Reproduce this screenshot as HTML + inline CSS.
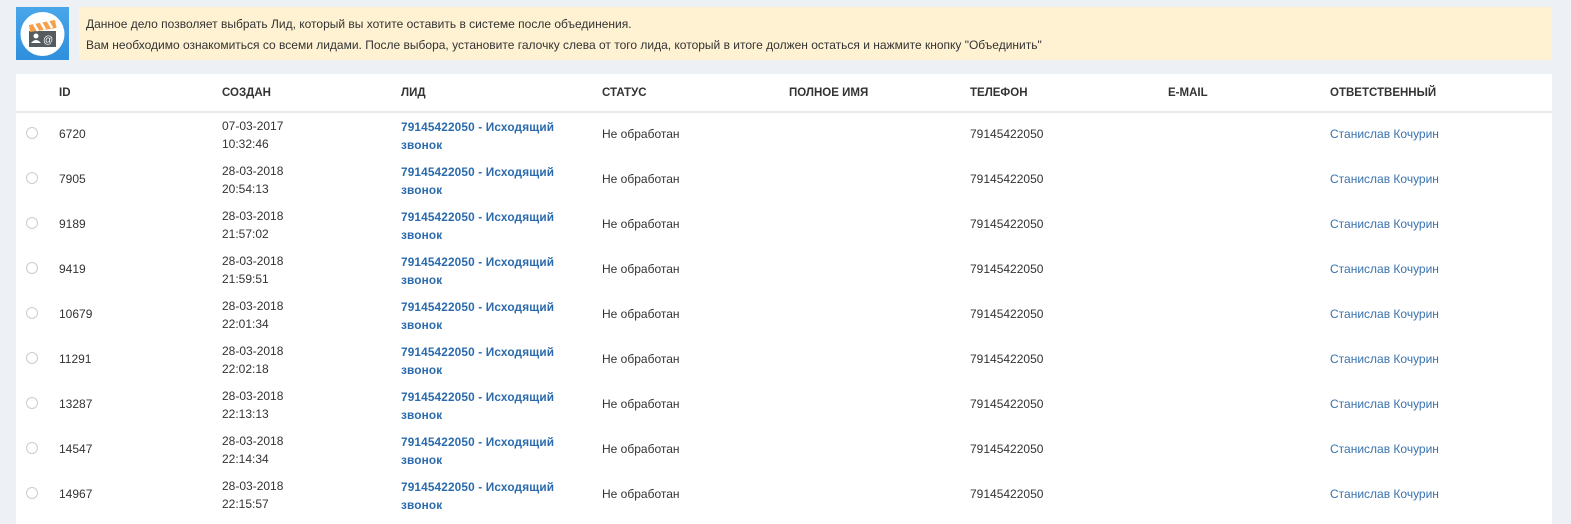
<!DOCTYPE html>
<html><head><meta charset="utf-8"><style>
html,body{margin:0;height:524px;overflow:hidden}
body{background:#edf1f5;font-family:"Liberation Sans",Arial,sans-serif;width:1571px;position:relative;color:#333}
.ic{position:absolute;left:16px;top:7px;width:53px;height:53px;background:linear-gradient(#4aa6ea,#2f8fdc)}
.info{position:absolute;left:79px;top:7px;width:1473px;height:53px;background:#fff2d2;font-size:12px;line-height:21px;color:#333;box-sizing:border-box;padding:7px 0 0 7px}
.tbl{position:absolute;left:16px;top:74px;width:1536px;height:460px;background:#fff}
.hd{position:absolute;left:0;top:0;width:100%;height:37px;border-bottom:2px solid #e6ebf0}
.c{position:absolute;font-size:12px}
.h{font-weight:bold;font-size:11.5px;top:13px;color:#333}
.row{position:absolute;left:0;width:100%;height:45px}
.r{position:absolute;left:10px;top:15px;width:12px;height:12px;border:1px solid #ccc;border-radius:50%;box-sizing:border-box}
.l{color:#2a6aad;font-weight:bold;font-size:11.8px;line-height:18px;letter-spacing:0.15px}
.a{color:#3973ae}
.d{line-height:18px}
</style></head><body>
<div class="ic"><svg width="53" height="53" viewBox="0 0 53 53">
<circle cx="26.5" cy="27" r="22" fill="#fff"/>
<rect x="13" y="24" width="27" height="16" fill="#555b5f"/>
<path d="M13 18 L39 13 L40.5 21 L14 25Z" fill="#f5a04a"/>
<path d="M18 17 L22 24 M25 15.5 L29 22.5 M32 14 L36 21" stroke="#fff" stroke-width="2.5"/>
<circle cx="20" cy="29" r="2.5" fill="#fff"/><path d="M15 36 Q20 30 25 36Z" fill="#fff"/>
<text x="27" y="36" font-size="10" fill="#fff" font-family="Liberation Sans">@</text>
</svg></div>
<div class="info">Данное дело позволяет выбрать Лид, который вы хотите оставить в системе после объединения.<br>Вам необходимо ознакомиться со всеми лидами. После выбора, установите галочку слева от того лида, который в итоге должен остаться и нажмите кнопку "Объединить"</div>
<div class="tbl">
<div class="hd">
<span class="c h" style="left:43px">ID</span>
<span class="c h" style="left:206px">СОЗДАН</span>
<span class="c h" style="left:385px">ЛИД</span>
<span class="c h" style="left:586px">СТАТУС</span>
<span class="c h" style="left:773px">ПОЛНОЕ ИМЯ</span>
<span class="c h" style="left:954px">ТЕЛЕФОН</span>
<span class="c h" style="left:1152px">E-MAIL</span>
<span class="c h" style="left:1314px">ОТВЕТСТВЕННЫЙ</span>
</div>
</div>
<div style="position:absolute;left:16px;top:112px;width:1536px">
<div class="row" style="top:0"><div class="r"></div><span class="c" style="left:43px;top:15px">6720</span><span class="c d" style="left:206px;top:5px">07-03-2017<br>10:32:46</span><span class="c l" style="left:385px;top:6px">79145422050 - Исходящий<br>звонок</span><span class="c" style="left:586px;top:15px">Не обработан</span><span class="c" style="left:954px;top:15px">79145422050</span><span class="c a" style="left:1314px;top:15px">Станислав Кочурин</span></div>
<div class="row" style="top:45px"><div class="r"></div><span class="c" style="left:43px;top:15px">7905</span><span class="c d" style="left:206px;top:5px">28-03-2018<br>20:54:13</span><span class="c l" style="left:385px;top:6px">79145422050 - Исходящий<br>звонок</span><span class="c" style="left:586px;top:15px">Не обработан</span><span class="c" style="left:954px;top:15px">79145422050</span><span class="c a" style="left:1314px;top:15px">Станислав Кочурин</span></div>
<div class="row" style="top:90px"><div class="r"></div><span class="c" style="left:43px;top:15px">9189</span><span class="c d" style="left:206px;top:5px">28-03-2018<br>21:57:02</span><span class="c l" style="left:385px;top:6px">79145422050 - Исходящий<br>звонок</span><span class="c" style="left:586px;top:15px">Не обработан</span><span class="c" style="left:954px;top:15px">79145422050</span><span class="c a" style="left:1314px;top:15px">Станислав Кочурин</span></div>
<div class="row" style="top:135px"><div class="r"></div><span class="c" style="left:43px;top:15px">9419</span><span class="c d" style="left:206px;top:5px">28-03-2018<br>21:59:51</span><span class="c l" style="left:385px;top:6px">79145422050 - Исходящий<br>звонок</span><span class="c" style="left:586px;top:15px">Не обработан</span><span class="c" style="left:954px;top:15px">79145422050</span><span class="c a" style="left:1314px;top:15px">Станислав Кочурин</span></div>
<div class="row" style="top:180px"><div class="r"></div><span class="c" style="left:43px;top:15px">10679</span><span class="c d" style="left:206px;top:5px">28-03-2018<br>22:01:34</span><span class="c l" style="left:385px;top:6px">79145422050 - Исходящий<br>звонок</span><span class="c" style="left:586px;top:15px">Не обработан</span><span class="c" style="left:954px;top:15px">79145422050</span><span class="c a" style="left:1314px;top:15px">Станислав Кочурин</span></div>
<div class="row" style="top:225px"><div class="r"></div><span class="c" style="left:43px;top:15px">11291</span><span class="c d" style="left:206px;top:5px">28-03-2018<br>22:02:18</span><span class="c l" style="left:385px;top:6px">79145422050 - Исходящий<br>звонок</span><span class="c" style="left:586px;top:15px">Не обработан</span><span class="c" style="left:954px;top:15px">79145422050</span><span class="c a" style="left:1314px;top:15px">Станислав Кочурин</span></div>
<div class="row" style="top:270px"><div class="r"></div><span class="c" style="left:43px;top:15px">13287</span><span class="c d" style="left:206px;top:5px">28-03-2018<br>22:13:13</span><span class="c l" style="left:385px;top:6px">79145422050 - Исходящий<br>звонок</span><span class="c" style="left:586px;top:15px">Не обработан</span><span class="c" style="left:954px;top:15px">79145422050</span><span class="c a" style="left:1314px;top:15px">Станислав Кочурин</span></div>
<div class="row" style="top:315px"><div class="r"></div><span class="c" style="left:43px;top:15px">14547</span><span class="c d" style="left:206px;top:5px">28-03-2018<br>22:14:34</span><span class="c l" style="left:385px;top:6px">79145422050 - Исходящий<br>звонок</span><span class="c" style="left:586px;top:15px">Не обработан</span><span class="c" style="left:954px;top:15px">79145422050</span><span class="c a" style="left:1314px;top:15px">Станислав Кочурин</span></div>
<div class="row" style="top:360px"><div class="r"></div><span class="c" style="left:43px;top:15px">14967</span><span class="c d" style="left:206px;top:5px">28-03-2018<br>22:15:57</span><span class="c l" style="left:385px;top:6px">79145422050 - Исходящий<br>звонок</span><span class="c" style="left:586px;top:15px">Не обработан</span><span class="c" style="left:954px;top:15px">79145422050</span><span class="c a" style="left:1314px;top:15px">Станислав Кочурин</span></div>
</div>
</body></html>
